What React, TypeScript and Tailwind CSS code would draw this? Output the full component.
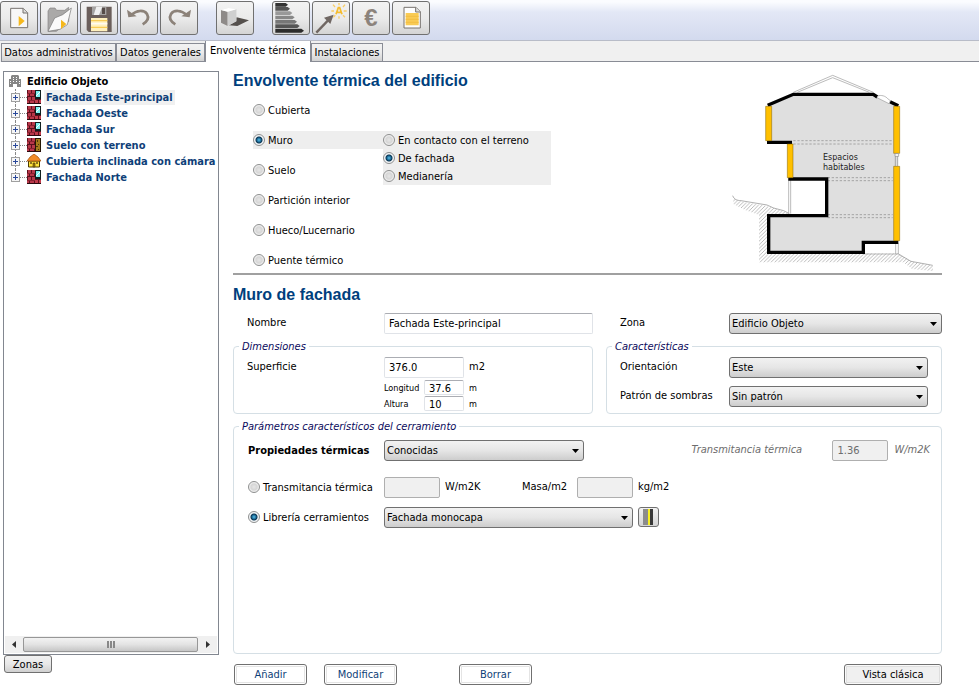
import React from "react";

type IconProps = { children: React.ReactNode };

function ToolButton({ label, children }: { label: string; children: React.ReactNode }) {
  return (
    <button
      type="button"
      aria-label={label}
      className="h-[34px] w-[38px] shrink-0 overflow-hidden rounded-[3px] border border-[#707070] bg-linear-to-b from-[#f3f3f3] via-[#ebebeb] to-[#d4d4d4]"
    >
      {children}
    </button>
  );
}

function ToolSvg({ children }: IconProps) {
  return (
    <svg viewBox="0 0 108 96" className="block h-8 w-9" aria-hidden="true">
      {children}
    </svg>
  );
}

function NewIcon() {
  return (
    <ToolSvg>
      <path d="M29 19h38l13 13v45H29z" fill="#f7f7f7" stroke="#77736f" strokeWidth="3" />
      <path d="M66 19v14h14" fill="#ddd" stroke="#77736f" strokeWidth="3" />
      <path d="M53 42l18 15-18 16z" fill="#f5b81c" />
    </ToolSvg>
  );
}

function OpenIcon() {
  return (
    <ToolSvg>
      <path d="M21 27l6-9h15l5 7h24l12-9v42L46 88H21z" fill="#aaa9a8" stroke="#858483" strokeWidth="2" />
      <path d="M21 88L41 48l24-10 26-20-12 50-22 14z" fill="#fafafa" stroke="#777" strokeWidth="2" />
      <path d="M60 53l16 13-16 15z" fill="#f5b81c" />
    </ToolSvg>
  );
}

function SaveIcon() {
  return (
    <ToolSvg>
      <path d="M17 14h75v76H23l-6-6z" fill="#6b5f5b" />
      <path d="M33 14h43v25H33z" fill="#a5a3a2" />
      <path d="M46 14h18L54 39H38z" fill="#f0f0f0" />
      <path d="M63 17h9v19h-9z" fill="#554b48" />
      <path d="M30 48h49v40H30z" fill="#fff0bd" />
      <path d="M30 56h49M30 76h49" stroke="#f9cc55" strokeWidth="4" />
      <path d="M30 65h49" stroke="#fffaf0" strokeWidth="5" />
    </ToolSvg>
  );
}

function CurveArrow() {
  return (
    <>
      <path d="M32 38C46 24 70 23 78 36c7 12 2 22-13 31" fill="none" stroke="#8c8279" strokeWidth="8" />
      <path d="M18 23l4 23 25-3z" fill="#8c8279" />
    </>
  );
}

function UndoIcon() {
  return (
    <ToolSvg>
      <CurveArrow />
    </ToolSvg>
  );
}

function RedoIcon() {
  return (
    <ToolSvg>
      <g transform="translate(108 0) scale(-1 1)">
        <CurveArrow />
      </g>
    </ToolSvg>
  );
}

function BoxIcon() {
  return (
    <ToolSvg>
      <path d="M34 62l25-16 37 9-35 17-25-2z" fill="#55504d" />
      <path d="M12 24l20-6 26 4v36L32 72 12 62z" fill="#e4e4e4" />
      <path d="M12 24l20 5v43l-20-10z" fill="#8e8a88" />
      <path d="M32 29l26-7v36L32 72z" fill="#cfcfcf" />
      <path d="M12 24l22-6 24 4-26 7z" fill="#fff" />
    </ToolSvg>
  );
}

function ScaleIcon() {
  return (
    <ToolSvg>
      <path d="M7 3h31l7 5-7 6H7z" fill="#333" />
      <path d="M7 15h37l7 5-7 6H7z" fill="#555" />
      <path d="M7 28h44l7 5-7 6H7z" fill="#999" />
      <path d="M7 41h51l7 5-7 6H7z" fill="#888" />
      <path d="M7 54h58l7 5-7 6H7z" fill="#777" />
      <path d="M7 67h66l7 5-7 6H7z" fill="#555" />
      <path d="M7 80h78l8 6-8 6H7z" fill="#2c2c2c" />
    </ToolSvg>
  );
}

function WandIcon() {
  return (
    <ToolSvg>
      <path d="M10 92l38-40" stroke="#706763" strokeWidth="7" />
      <path d="M62 38L33 47l19 19z" fill="#706763" />
      <path
        d="M78 3v7M60 8l6 7M96 8l-6 7M55 27h8M92 27h9M61 46l6-6M96 46l-6-6M78 43v7"
        stroke="#f8cd66"
        strokeWidth="4"
      />
      <path d="M69 37l7-20h4l7 20M73 31h11" fill="none" stroke="#f5bd2f" strokeWidth="5" />
    </ToolSvg>
  );
}

function ReportIcon() {
  return (
    <ToolSvg>
      <path d="M33 16h36l13 13v49H33z" fill="#fdfdfd" stroke="#77736f" strokeWidth="3" />
      <path d="M68 16v14h14" fill="#ddd" stroke="#77736f" strokeWidth="3" />
      <path d="M38 33h39v37H38z" fill="#f9cb54" />
      <path d="M38 43h39M38 52h39M38 61h39" stroke="#f3bf42" strokeWidth="3" />
    </ToolSvg>
  );
}

function WallIcon({ kind }: { kind: "window" | "soil" }) {
  return (
    <svg viewBox="0 0 14 14" className="size-[14px] shrink-0" aria-hidden="true">
      <path d="M0 0h14v14H0z" fill="#5a101c" />
      <path d="M1 0h3v3H1zM5 0h3v3H5zM0 4h2v2H0zM3 4h4v2H3zM1 7h3v3H1zM5 7h3v3H5zM0 11h2v2H0zM3 11h4v2H3z" fill="#b8384a" />
      <path d="M0 3h8v1H0zM0 10h8v1H0z" fill="#8a2230" />
      {kind === "window" ? (
        <>
          <path d="M8 0h6v9H8z" fill="#102020" />
          <path d="M9 1h4v6H9z" fill="#7ff0f0" />
          <path d="M9 6l4-4" stroke="#fff" />
          <path d="M8 10h3v3H8zM12 10h2v3h-2z" fill="#c03a4a" />
        </>
      ) : (
        <>
          <path d="M8 0h6v14H8z" fill="#241804" />
          <path d="M9 1h4v12H9z" fill="#a47a1c" />
          <path d="M10 2h1v2h-1zM11 6h1v1h-1zM9 8h2v1H9zM11 11h1v1h-1z" fill="#4d360a" />
        </>
      )}
      <path d="M0 13h14v1H0z" fill="#2a0a0e" />
    </svg>
  );
}

function HouseIcon() {
  return (
    <svg viewBox="0 0 14 14" className="size-[14px] shrink-0" aria-hidden="true">
      <path d="M1.5 7h11v6h-11z" fill="#ffe23a" stroke="#4c3b00" />
      <path d="M0 7l3-4 4-3 4 3 3 4z" fill="#f28c28" stroke="#9c4a08" strokeWidth="0.7" />
      <path d="M3 8h2v2H3zM9 8h2v2H9z" fill="#8a7420" />
      <path d="M6 9h2v4H6z" fill="#9a7a10" stroke="#4c3b00" strokeWidth="0.6" />
    </svg>
  );
}

function BuildingIcon() {
  return (
    <svg viewBox="0 0 12 12" className="size-3 shrink-0" aria-hidden="true">
      <path d="M0 4h2V1l1-1h6l1 1v3h2v8H8V9H4v3H0z" fill="#858585" />
      <path d="M4 2h1v1H4zM7 2h1v1H7zM4 4h1v1H4zM7 4h1v1H7zM1 6h1v1H1zM4 6h1v1H4zM7 6h1v1H7zM10 6h1v1h-1zM1 8h1v1H1zM10 8h1v1h-1z" fill="#fff" />
    </svg>
  );
}

function Radio({ name, label, checked = false }: { name: string; label: string; checked?: boolean }) {
  return (
    <label className="flex h-[18px] items-center gap-[3px] whitespace-nowrap">
      <input
        type="radio"
        name={name}
        defaultChecked={checked}
        className="size-3 shrink-0 appearance-none rounded-full border border-[#8e8f8f] bg-[radial-gradient(circle,#e6e6e6_0,#d6d6d6_3px,#f4f4f4_5px)] checked:bg-[radial-gradient(circle_at_5px_5px,#5cc0e6_0,#1a6a98_2px,#0b3450_3px,#f2f5f7_4px)]"
      />
      <span className="pt-px">{label}</span>
    </label>
  );
}

function Select({ id, value, className, label }: { id: string; value: string; className: string; label?: string }) {
  return (
    <div className={`relative ${className}`}>
      <select
        id={id}
        aria-label={label}
        className="block h-[21px] w-full appearance-none rounded-[3px] border border-[#707070] bg-linear-to-b from-[#f2f2f2] via-[#e6e6e6] to-[#cdcdcd] pt-px pr-5 pl-[2px] text-black"
      >
        <option>{value}</option>
      </select>
      <svg viewBox="0 0 7 4" className="pointer-events-none absolute top-[9px] right-[5px] h-1 w-[7px]" aria-hidden="true">
        <path d="M0 0h7L3.5 4z" fill="#000" />
      </svg>
    </div>
  );
}

const fieldClass =
  "rounded-[2px] border border-[#e0e3e8] border-t-[#abadb3] bg-white px-1 text-black outline-none disabled:border-[#afafaf] disabled:bg-[#f0f0f0] disabled:text-[#6d6d6d]";

function Section() {
  return (
    <svg viewBox="0 15 636 609" className="h-[203px] w-[212px] shrink-0" role="img" aria-label="Sección del edificio">
      <defs>
        <pattern id="hatch" width="11" height="11" patternUnits="userSpaceOnUse">
          <path d="M-1 12L12 -1" stroke="#999" strokeWidth="2" />
        </pattern>
      </defs>
      <path d="M10 400l15 8 85 15 30 10 38 12v5h-62v115h390l40 25 63 12v16l-63-6-25-20H87V450l-42-15-35-18z" fill="url(#hatch)" />
      <path d="M8 392c5 12 12 14 25 15l78 13 20 9 30 8 17 9M505 567l38 22 65 12" fill="none" stroke="#888" strokeWidth="2" />
      <path d="M116 122L190 88h245l68 34v410H400v30H117V452h173V342H180V232h-64z" fill="#dfdfdf" />
      <path d="M182 345h103v103H182z" fill="#fff" />
      <path d="M403 537h95v28h-95z" fill="#fff" />
      <path d="M190 82L308 31l122 51M202 82l106-44 110 44" fill="none" stroke="#999" strokeWidth="2" />
      <path d="M190 227h300M190 237h300M293 338h195M293 347h195M293 449h195M293 458h195" stroke="#888" strokeWidth="2" strokeDasharray="7 5" />
      <path d="M176 340v106M182 340v106M497 535v32M505 535v32M403 567h102" stroke="#999" strokeWidth="2" />
      <path d="M113 121l77-33h240l12 8M480 110l25 12" fill="none" stroke="#000" strokeWidth="10" />
      <path d="M443 93c10-4 24 0 30 8l8 6-4 9-36-18z" fill="#fff" stroke="#999" strokeWidth="2" />
      <path d="M111 232h75M175 342h115v110H116v110h284v-30h105" fill="none" stroke="#000" strokeWidth="10" />
      <path d="M107 124h18v103h-18zM172 237h17v101h-17zM491 124h18v141h-18zM491 304h18v223h-18z" fill="#ffc000" stroke="#806000" strokeWidth="1.5" />
      <path d="M495 266h11v8h-11zM496 274v29M503 274v29" fill="#fff" stroke="#888" strokeWidth="2" />
      <text x="279" y="284" fontSize="24" fontFamily="DejaVu Sans, sans-serif" fill="#222">Espacios</text>
      <text x="279" y="314" fontSize="24" fontFamily="DejaVu Sans, sans-serif" fill="#222">habitables</text>
    </svg>
  );
}

const treeItems: { name: string; kind: "window" | "soil" | "roof" }[] = [
  { name: "Fachada Este-principal", kind: "window" },
  { name: "Fachada Oeste", kind: "window" },
  { name: "Fachada Sur", kind: "window" },
  { name: "Suelo con terreno", kind: "soil" },
  { name: "Cubierta inclinada con cámara", kind: "roof" },
  { name: "Fachada Norte", kind: "window" },
];

function Tree() {
  return (
    <div className="flex flex-1 flex-col overflow-hidden border border-[#828790] pt-px font-bold">
      <div className="flex h-4 items-center gap-[6px] pl-[5px] text-black">
        <BuildingIcon />
        <span className="pt-px">Edificio Objeto</span>
      </div>
      <ul>
        {treeItems.map((item, i) => (
          <li key={item.name} className="flex h-4 items-center pl-[7px] whitespace-nowrap text-[#0f3f78]">
            <span className="flex h-4 w-[9px] shrink-0 flex-col items-center">
              <span className="flex-1 border-l border-dotted border-[#888]" />
              <button
                type="button"
                aria-label={`Expandir ${item.name}`}
                className="flex size-[9px] items-center justify-center border border-[#a0a0a0] bg-[#f6f6f6]"
              >
                <svg viewBox="0 0 5 5" className="size-[5px]" aria-hidden="true">
                  <path d="M2 0h1v5H2zM0 2h5v1H0z" fill="#29489a" />
                </svg>
              </button>
              <span className={i < treeItems.length - 1 ? "flex-1 border-l border-dotted border-[#888]" : "flex-1"} />
            </span>
            <span className="w-[7px] shrink-0 border-t border-dotted border-[#888]" />
            {item.kind === "roof" ? <HouseIcon /> : <WallIcon kind={item.kind} />}
            <span className={i === 0 ? "ml-[3px] bg-[#f0f0f0] px-[2px] leading-[15px]" : "ml-[3px] px-[2px] leading-[15px]"}>
              {item.name}
            </span>
          </li>
        ))}
      </ul>
      <div className="mx-px mt-auto mb-px flex h-[17px] items-center bg-[#f0f0f0]">
        <button type="button" aria-label="Desplazar a la izquierda" className="flex w-[18px] justify-center">
          <svg viewBox="0 0 4 7" className="h-[7px] w-1" aria-hidden="true">
            <path d="M4 0v7L0 3.5z" fill="#333" />
          </svg>
        </button>
        <div className="flex h-[15px] flex-1 items-center justify-center gap-px rounded-[2px] border border-[#979797] bg-linear-to-b from-[#f3f3f3] via-[#e3e3e3] to-[#c6c6c6]">
          <span className="h-[7px] w-[2px] bg-[#888]" />
          <span className="h-[7px] w-[2px] bg-[#888]" />
          <span className="h-[7px] w-[2px] bg-[#888]" />
        </div>
        <button type="button" aria-label="Desplazar a la derecha" className="flex w-[19px] justify-center">
          <svg viewBox="0 0 4 7" className="h-[7px] w-1" aria-hidden="true">
            <path d="M0 0v7l4-3.5z" fill="#333" />
          </svg>
        </button>
      </div>
    </div>
  );
}

const tabClass =
  "h-[19px] border border-[#898c95] bg-linear-to-b from-[#f2f2f2] via-[#ebebeb] to-[#d2d2d2] pt-px text-center whitespace-nowrap";
const legendClass = "ml-[5px] h-[14px] px-[3px] leading-4 text-[#0a0a5c] italic";
const fieldsetClass = "min-w-0 rounded-[4px] border border-[#d5dfe5]";
const actionClass =
  "h-[21px] w-[73px] rounded-[3px] border border-[#707070] bg-white pt-px text-[#0f3f78] shadow-[inset_0_0_0_1px_#fff,inset_0_0_0_2px_#e4e4e4]";
const headingClass = "pt-px font-['Liberation_Sans',Arial,sans-serif] text-base leading-5 font-bold text-[#003f7d]";

export default function App() {
  return (
    <div className="flex min-h-screen flex-col bg-white font-['DejaVu_Sans_Condensed','DejaVu_Sans',sans-serif] text-[11px] leading-[14px] text-black">
      <header className="flex h-10 items-start bg-linear-to-b from-[#fbfcff] from-5% via-[#e3e8f6] via-30% to-[#d3daee] pt-px">
        <div className="flex gap-[2px]">
          <ToolButton label="Nuevo"><NewIcon /></ToolButton>
          <ToolButton label="Abrir"><OpenIcon /></ToolButton>
          <ToolButton label="Guardar"><SaveIcon /></ToolButton>
          <ToolButton label="Deshacer"><UndoIcon /></ToolButton>
          <ToolButton label="Rehacer"><RedoIcon /></ToolButton>
        </div>
        <div className="mx-[18px]">
          <ToolButton label="Edificio"><BoxIcon /></ToolButton>
        </div>
        <div className="flex gap-[2px]">
          <ToolButton label="Calificación"><ScaleIcon /></ToolButton>
          <ToolButton label="Medidas de mejora"><WandIcon /></ToolButton>
          <ToolButton label="Análisis económico">
            <span className="font-['Liberation_Sans',Arial,sans-serif] text-2xl leading-8 font-bold text-[#8c837c]">€</span>
          </ToolButton>
          <ToolButton label="Informe"><ReportIcon /></ToolButton>
        </div>
      </header>

      <nav className="flex h-[22px] items-end border-t border-[#b8bcc8] bg-[#f0f0f0]">
        <button type="button" className={`ml-px w-[115px] ${tabClass}`}>Datos administrativos</button>
        <button type="button" className={`w-[89px] ${tabClass}`}>Datos generales</button>
        <button type="button" aria-current="page" className="h-[21px] w-[106px] border-x border-[#898c95] bg-white pb-[2px] text-center whitespace-nowrap">
          Envolvente térmica
        </button>
        <button type="button" className={`w-[72px] ${tabClass}`}>Instalaciones</button>
        <span className="flex-1 border-b border-[#898c95]" />
      </nav>

      <div className="flex flex-1">
        <aside className="ml-[3px] flex w-[216px] shrink-0 flex-col pt-[9px] pb-4">
          <Tree />
          <button
            type="button"
            className="ml-px h-[18px] w-12 rounded-[3px] border border-[#707070] bg-linear-to-b from-[#f2f2f2] via-[#e8e8e8] to-[#d0d0d0] pt-px leading-4"
          >
            Zonas
          </button>
        </aside>

        <main className="mr-[37px] ml-[14px] flex min-w-0 flex-1 flex-col pt-2 pb-1">
          <section className="flex justify-between border-b-2 border-[#a0a0a0]">
            <div>
              <h1 className={headingClass}>Envolvente térmica del edificio</h1>
              <div className="mt-[10px] ml-5 flex">
                <div className="flex w-[130px] flex-col gap-3">
                  <Radio name="tipo" label="Cubierta" />
                  <div className="bg-[#eee]"><Radio name="tipo" label="Muro" checked /></div>
                  <Radio name="tipo" label="Suelo" />
                  <Radio name="tipo" label="Partición interior" />
                  <Radio name="tipo" label="Hueco/Lucernario" />
                  <Radio name="tipo" label="Puente térmico" />
                </div>
                <div className="mt-[30px] w-[168px] self-start bg-[#eee]">
                  <Radio name="muro" label="En contacto con el terreno" />
                  <Radio name="muro" label="De fachada" checked />
                  <Radio name="muro" label="Medianería" />
                </div>
              </div>
            </div>
            <Section />
          </section>

          <h2 className={`mt-[9px] ${headingClass}`}>Muro de fachada</h2>

          <div className="mt-2 grid grid-cols-[15fr_14fr] gap-x-[13px] gap-y-[5px]">
            <div className="flex pl-[14px]">
              <label htmlFor="nombre" className="w-[137px] shrink-0 pt-[3px]">Nombre</label>
              <input id="nombre" defaultValue="Fachada Este-principal" className={`h-[21px] min-w-0 flex-1 ${fieldClass}`} />
            </div>
            <div className="flex pl-[14px]">
              <label htmlFor="zona" className="w-[109px] shrink-0 pt-[3px]">Zona</label>
              <Select id="zona" value="Edificio Objeto" className="flex-1" />
            </div>

            <fieldset className={fieldsetClass}>
              <legend className={legendClass}>Dimensiones</legend>
              <div className="flex pt-1 pb-[2px] pl-[13px]">
                <label htmlFor="superficie" className="w-[137px] shrink-0 pt-[3px]">Superficie</label>
                <div>
                  <div className="flex gap-[5px]">
                    <input id="superficie" defaultValue="376.0" className={`h-[21px] w-20 ${fieldClass}`} />
                    <span className="pt-[3px]">m2</span>
                  </div>
                  <div className="mt-[2px] flex items-center">
                    <label htmlFor="longitud" className="w-10 text-[9px]">Longitud</label>
                    <input id="longitud" defaultValue="37.6" className={`h-[15px] w-10 pt-px ${fieldClass}`} />
                    <span className="ml-[5px] text-[9px]">m</span>
                  </div>
                  <div className="mt-px flex items-center">
                    <label htmlFor="altura" className="w-10 text-[9px]">Altura</label>
                    <input id="altura" defaultValue="10" className={`h-[15px] w-10 pt-px ${fieldClass}`} />
                    <span className="ml-[5px] text-[9px]">m</span>
                  </div>
                </div>
              </div>
            </fieldset>

            <fieldset className={fieldsetClass}>
              <legend className={legendClass}>Características</legend>
              <div className="flex flex-col gap-2 pt-1 pr-[13px] pl-[13px]">
                <div className="flex">
                  <label htmlFor="orientacion" className="w-[109px] shrink-0 pt-[3px]">Orientación</label>
                  <Select id="orientacion" value="Este" className="flex-1" />
                </div>
                <div className="flex">
                  <label htmlFor="patron" className="w-[109px] shrink-0 pt-[3px]">Patrón de sombras</label>
                  <Select id="patron" value="Sin patrón" className="flex-1" />
                </div>
              </div>
            </fieldset>
          </div>

          <fieldset className={`mt-[5px] flex-1 ${fieldsetClass}`}>
            <legend className={legendClass}>Parámetros característicos del cerramiento</legend>
            <div className="flex flex-col pt-[7px] pr-[11px] pl-[14px]">
              <div className="flex">
                <label htmlFor="propiedades" className="w-[136px] shrink-0 pt-1 font-bold">Propiedades térmicas</label>
                <Select id="propiedades" value="Conocidas" className="w-[200px]" />
                <div className="ml-auto flex text-[#6d6d6d]">
                  <label htmlFor="u-calculada" className="w-[141px] pt-[3px] italic">Transmitancia térmica</label>
                  <input id="u-calculada" disabled defaultValue="1.36" className={`h-[21px] w-14 ${fieldClass}`} />
                  <span className="ml-[6px] pt-[3px] italic">W/m2K</span>
                </div>
              </div>
              <div className="mt-4 flex">
                <div className="w-[136px] shrink-0 pt-px">
                  <Radio name="modo" label="Transmitancia térmica" />
                </div>
                <input aria-label="Transmitancia térmica" disabled className={`h-[21px] w-14 ${fieldClass}`} />
                <span className="w-[82px] pt-[3px] pl-[5px]">W/m2K</span>
                <label htmlFor="masa" className="w-[55px] pt-[3px]">Masa/m2</label>
                <input id="masa" disabled className={`h-[21px] w-14 ${fieldClass}`} />
                <span className="pt-[3px] pl-[5px]">kg/m2</span>
              </div>
              <div className="mt-[9px] flex">
                <div className="w-[136px] shrink-0 pt-px">
                  <Radio name="modo" label="Librería cerramientos" checked />
                </div>
                <Select id="libreria" label="Librería cerramientos" value="Fachada monocapa" className="w-[249px]" />
                <button
                  type="button"
                  aria-label="Abrir librería de cerramientos"
                  className="ml-[5px] h-5 w-[21px] rounded-[3px] border border-[#707070] bg-linear-to-b from-[#f2f2f2] to-[#d4d4d4]"
                >
                  <svg viewBox="0 0 19 18" className="h-[18px] w-[19px]" aria-hidden="true">
                    <path d="M4 1h5v16H4z" fill="#8c8c8c" />
                    <path d="M9 1h2v16H9z" fill="#f8f020" />
                    <path d="M11 1h3v16h-3z" fill="#383838" />
                  </svg>
                </button>
              </div>
            </div>
          </fieldset>

          <div className="mt-[10px] flex pl-px">
            <button type="button" className={actionClass}>Añadir</button>
            <button type="button" className={`ml-[17px] ${actionClass}`}>Modificar</button>
            <button type="button" className={`ml-[62px] ${actionClass}`}>Borrar</button>
            <button
              type="button"
              className="ml-auto h-[21px] w-[98px] rounded-[3px] border border-[#707070] bg-[#f0f0f0] pt-px shadow-[inset_0_0_0_1px_#fafafa,inset_0_0_0_2px_#dedede]"
            >
              Vista clásica
            </button>
          </div>
        </main>
      </div>
    </div>
  );
}
